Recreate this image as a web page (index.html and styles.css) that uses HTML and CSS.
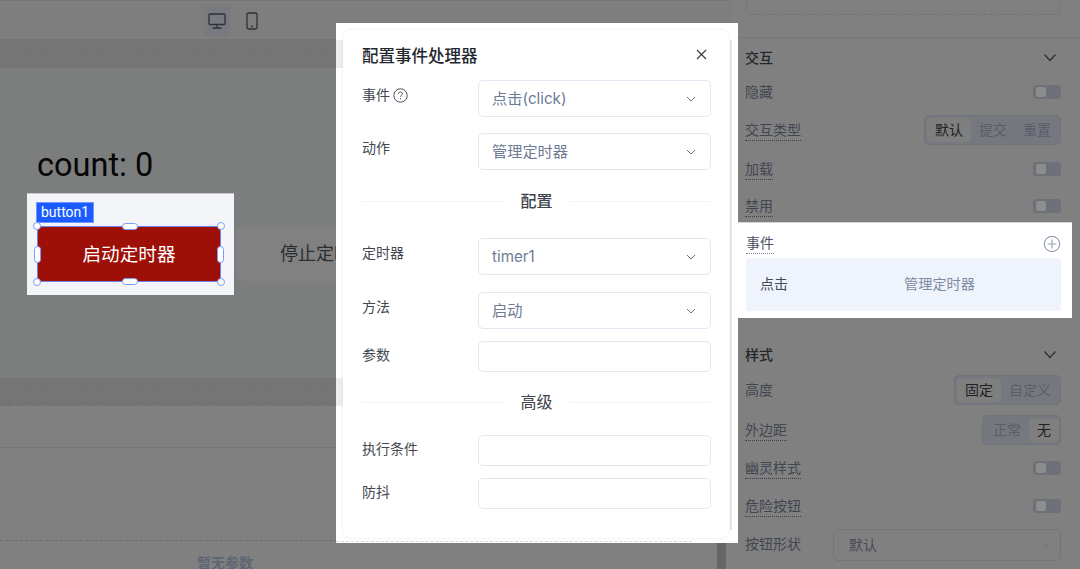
FILE: index.html
```html
<!DOCTYPE html>
<html lang="zh-CN">
<head>
<meta charset="utf-8">
<title>配置事件处理器</title>
<link rel="stylesheet" href="styles.css">
</head>
<body>
<div class="app">
  <main class="main">
    <div class="topbar">
      <span class="device active">
        <svg width="18" height="16" viewBox="0 0 18 16" class="ico"><rect x="1" y="1" width="16" height="10.500" rx="1"/><path d="M9 11.500V15M4.500 15h9"/></svg>
      </span>
      <span class="device">
        <svg width="12" height="18" viewBox="0 0 12 18" class="ico"><rect x="1" y="1" width="10" height="16" rx="1.500"/><path d="M5 14.500h2"/></svg>
      </span>
    </div>
    <div class="band"></div>
    <div class="canvas">
      <div class="count">count: 0</div>
      <div class="btn-row">
        <div class="spot-btn">
          <span class="tag">button1</span>
          <div class="red-btn">
            启动定时器
            <i class="dot d-tl"></i><i class="dot d-tr"></i><i class="dot d-bl"></i><i class="dot d-br"></i>
            <i class="pill p-t"></i><i class="pill p-b"></i><i class="pill p-l"></i><i class="pill p-r"></i>
          </div>
        </div>
        <div class="grey-btn">停止定时器</div>
      </div>
    </div>
    <div class="band band-2"></div>
    <div class="lower">
      <div class="lower-line"></div>
      <div class="params">暂无参数</div>
    </div>
    <div class="thumb"></div>
  </main>

  <aside class="panel">
    <div class="stub"></div>
    <div class="sec-head mt1 h36"><span>交互</span><svg class="chev-dark" width="14" height="9" viewBox="0 0 14 9"><path d="M1.500 1.500 7 7.500l5.500-6"/></svg></div>
    <div class="row h33"><span>隐藏</span><i class="switch"></i></div>
    <div class="row mt2 h40"><span class="dot-u">交互类型</span>
      <div class="seg"><b class="on">默认</b><b>提交</b><b>重置</b></div></div>
    <div class="row h38"><span class="dot-u">加载</span><i class="switch"></i></div>
    <div class="row mt2 h32"><span class="dot-u">禁用</span><i class="switch"></i></div>

    <section class="spot-event">
      <div class="ev-head"><span class="dot-u ev-title">事件</span>
        <svg width="18" height="18" viewBox="0 0 18 18" class="plus"><circle cx="9" cy="9" r="7.700"/><path d="M9 4.500v9M4.500 9h9"/></svg></div>
      <div class="ev-card"><span class="ev-name">点击</span><span class="ev-act">管理定时器</span></div>
    </section>

    <div class="sec-head mt18 h36"><span>样式</span><svg class="chev-dark" width="14" height="9" viewBox="0 0 14 9"><path d="M1.500 1.500 7 7.500l5.500-6"/></svg></div>
    <div class="row h35"><span>高度</span><div class="seg"><b class="on">固定</b><b>自定义</b></div></div>
    <div class="row h46"><span class="dot-u">外边距</span><div class="seg"><b>正常</b><b class="on">无</b></div></div>
    <div class="row h30"><span class="dot-u">幽灵样式</span><i class="switch"></i></div>
    <div class="row h46"><span class="dot-u">危险按钮</span><i class="switch"></i></div>
    <div class="row h32"><span class="lift">按钮形状</span>
      <div class="dim-select"><span class="lift">默认</span><svg class="chev" width="10" height="6" viewBox="0 0 10 6"><path d="M1 1l4 4 4-4"/></svg></div></div>
  </aside>

  <div class="modal">
    <div class="card">
      <header class="m-head"><h2>配置事件处理器</h2>
        <svg class="close" width="11" height="11" viewBox="0 0 11 11"><path d="M1 1l9 9M10 1l-9 9"/></svg></header>
      <div class="field"><label class="up">事件<svg class="help" width="15" height="15" viewBox="0 0 15 15"><circle cx="7.500" cy="7.500" r="6.700"/><path d="M5.600 5.800C5.600 4.700 6.400 4 7.500 4s1.900.7 1.900 1.700c0 1.400-1.900 1.500-1.900 3"/><path d="M7.500 10.300v1"/></svg></label>
        <div class="select"><span class="cjk">点击(click)</span><svg class="chev" width="10" height="6" viewBox="0 0 10 6"><path d="M1 1l4 4 4-4"/></svg></div></div>
      <div class="field g16"><label class="up">动作</label>
        <div class="select"><span class="cjk">管理定时器</span><svg class="chev" width="10" height="6" viewBox="0 0 10 6"><path d="M1 1l4 4 4-4"/></svg></div></div>
      <div class="divider d1"><span class="strong">配置</span></div>
      <div class="field g24"><label class="up">定时器</label>
        <div class="select"><span>timer1</span><svg class="chev" width="10" height="6" viewBox="0 0 10 6"><path d="M1 1l4 4 4-4"/></svg></div></div>
      <div class="field g17"><label class="up">方法</label>
        <div class="select"><span class="cjk">启动</span><svg class="chev" width="10" height="6" viewBox="0 0 10 6"><path d="M1 1l4 4 4-4"/></svg></div></div>
      <div class="field g12"><label>参数</label><div class="input"></div></div>
      <div class="divider d2"><span>高级</span></div>
      <div class="field g20"><label>执行条件</label><div class="input"></div></div>
      <div class="field g12"><label>防抖</label><div class="input"></div></div>
    </div>
    <div class="modal-dash"></div>
  </div>
</div>
</body>
</html>
```
FILE: styles.css
```css
* { box-sizing: border-box; }
html, body { margin: 0; height: 569px; overflow: hidden; }
body {
  font-family: Inter, "Noto Sans CJK SC", "Noto Sans", sans-serif;
  font-size: 14px;
  background: #808080;
  color: #4a4e57;
}
.app { position: relative; display: flex; width: 1080px; height: 569px; overflow: hidden; }

/* left, dimmed editor */
.main { position: relative; width: 732px; flex: none; display: flex; flex-direction: column; }
.topbar {
  height: 39px; flex: none; display: flex; justify-content: flex-end; align-items: flex-start;
  gap: 9px; padding: 5px 467px 0 0; background: #7e7e7e; border-top: 1px solid #777;
  box-shadow: inset 0 2px 0 #808080;
}
.device { width: 26px; height: 30px; display: flex; align-items: center; justify-content: center; }
.device.active { background: #787a7f; border-radius: 3px; }
.ico { fill: none; stroke: #2d3138; stroke-width: 1.300; }
.band {
  height: 29px; flex: none; background-color: #757575;
  background-image: radial-gradient(circle, #686868 0.800px, transparent 1.200px);
  background-size: 18.670px 18.670px;
  background-position: -1px 0;
}
.band-2 { height: 28px; background-position: -1px -3px; }
.canvas { height: 310px; flex: none; background: #7c7e7d; padding: 73px 0 0 37px; }
.count { font-family: Roboto, sans-serif; font-size: 32.500px; line-height: 48px; height: 48px; color: #060606; margin-bottom: 4px; }
.btn-row { display: flex; align-items: flex-start; margin-left: -10px; }
.spot-btn { width: 207px; height: 102px; background: #f3f5f9; padding: 8px 0 0 9px; border-top: 1px solid #c8c8c8; }
.tag {
  display: block; width: 58px; height: 21px; background: #1a5cff; color: #fff;
  border: 1px solid #6f97ff; font-family: Roboto, sans-serif; font-size: 14px; line-height: 19px; padding-left: 4px;
}
.red-btn {
  position: relative; width: 184px; height: 56px; margin: 3px 0 0 1px; background: #9e0f08; border: 1px solid #6f84e8;
  border-radius: 3px; color: #fff; font-size: 18.600px; line-height: 54px; text-align: center;
}
.dot, .pill { position: absolute; background: #fff; border: 1px solid #7d9bff; }
.dot { width: 8px; height: 8px; border-radius: 50%; }
.d-tl { left: -5px; top: -5px; } .d-tr { right: -5px; top: -5px; }
.d-bl { left: -5px; bottom: -5px; } .d-br { right: -5px; bottom: -5px; }
.pill { border-radius: 4px; }
.p-t, .p-b { width: 16px; height: 7px; left: 84px; }
.p-t { top: -4px; } .p-b { bottom: -4px; }
.p-l, .p-r { width: 7px; height: 17px; top: 19px; }
.p-l { left: -4px; } .p-r { right: -4px; }
.grey-btn {
  margin: 34px 0 0 2px; width: 180px; height: 54px; background: #818181; border-radius: 5px;
  padding-left: 44px; font-size: 18px; line-height: 54px; color: #2b2c2e; white-space: nowrap;
}
.lower { flex: 1; background: #808080; position: relative; padding-top: 41px; }
.lower-line { border-top: 1px solid #787878; height: 94px; border-bottom: 1px dashed #6b6d70; width: 692px; }
.params { text-align: center; width: 450px; font-size: 14px; font-weight: 700; color: #5e6675; line-height: 20px; margin-top: 12px; }
.thumb { position: absolute; left: 717px; top: 540px; width: 9px; height: 29px; background: #666; }

/* right panel */
.panel { flex: 1; padding: 0 19px 0 13px; background: #808080; position: relative; }
.stub { margin: -10px -19px 0 -13px; border-bottom: 1px solid #767676; position: relative; height: 48px; }
.stub::before { content: ""; position: absolute; left: 14px; right: 20px; top: 0; height: 23px; border: 1px dashed #727272; border-radius: 3px; }
.mt1 { margin-top: 1px; }
.mt2 { margin-top: 2px; }
.mt18 { margin-top: 18px; }
.h30 { height: 30px; } .h32 { height: 32px; } .h33 { height: 33px; } .h35 { height: 35px; } .h36 { height: 36px; }
.h38 { height: 38px; } .h40 { height: 40px; } .h46 { height: 46px; }
.sec-head, .row { display: flex; align-items: center; justify-content: space-between; }
.sec-head span { font-weight: 500; color: #24272c; }
.row > span { color: #424650; line-height: 20px; }
.lift { padding-bottom: 2px; }
.chev-dark { fill: none; stroke: #2e3036; stroke-width: 1.300; margin-right: 4px; }
.dot-u { border-bottom: 1.500px dotted #3a3e47; }
.switch { position: relative; width: 28px; height: 14px; border-radius: 3px; background: #6e7179; flex: none; }
.switch::before { content: ""; position: absolute; left: 3px; top: 2px; width: 10px; height: 10px; border-radius: 2px; background: #8d8d8d; }
.seg {
  display: flex; padding: 2px 1px 2px 2px; background: #76787f; border: 1px solid #70727c; border-radius: 5px; height: 30px;
}
.seg b { font-weight: 400; padding: 0 8px; line-height: 24px; height: 24px; color: #5a5e69; white-space: nowrap; }
.seg b.on { background: #7f7f7f; border-radius: 4px; color: #212226; }
.dim-select {
  width: 228px; height: 32px; border: 1px solid #737579; border-radius: 5px; display: flex; align-items: center;
  justify-content: space-between; padding: 0 9px 0 15px; color: #474b55;
}
.chev { fill: none; stroke: #6c7380; stroke-width: 1; flex: none; }
.spot-event { height: 96px; margin: 0 -11px 0 -7px; background: #fff; padding: 0 11px 0 8px; border-top: 1px solid #d6d6d6; }
.ev-head { height: 35px; display: flex; justify-content: space-between; align-items: center; padding-top: 6px; }
.ev-title { color: #4b5160; line-height: 20px; border-bottom-color: #7c8499; }
.plus { fill: none; stroke: #9aa3b8; stroke-width: 1.200; }
.ev-card {
  height: 53px; background: #eff3fc; border-radius: 3px; display: flex; align-items: center; padding: 0 0 3px 14px;
}
.ev-name { width: 144px; color: #454952; }
.ev-act { color: #7f8ba3; font-size: 14.200px; }

/* modal */
.modal {
  position: absolute; left: 336px; top: 23px; width: 402px; height: 520px; padding: 7px 9px 5px 7px;
  background:
    linear-gradient(#ededed, #ededed) 0 17px / 7px 28px no-repeat,
    linear-gradient(#ededed, #ededed) 0 355px / 7px 28px no-repeat,
    linear-gradient(#e6e6e6, #e6e6e6) 394px 17px / 2px 490px no-repeat,
    #fff;
}
.modal-dash { position: absolute; left: 0; bottom: 1px; width: 356px; border-top: 1px dashed #d8d8d8; }
.card {
  height: 100%; background: #fff; border-radius: 8px; padding: 14px 18px 0 19px;
  box-shadow: 0 0 3px rgba(120, 130, 150, .22);
  position: relative;
}
.m-head { height: 24px; display: flex; justify-content: space-between; align-items: center; padding-right: 4px; }
.m-head h2 { margin: 0; font-size: 16.500px; font-weight: 500; color: #24272d; line-height: 24px; }
.close { fill: none; stroke: #3a3d44; stroke-width: 1.200; margin-top: -3px; }
.field { display: flex; align-items: center; margin-top: 12px; }
.g12 { margin-top: 12px; } .g16 { margin-top: 16px; } .g17 { margin-top: 17px; } .g20 { margin-top: 20px; } .g24 { margin-top: 24px; }
.field label { width: 116px; flex: none; color: #434750; line-height: 20px; display: flex; align-items: center; gap: 3px; padding-bottom: 3px; }
.field label.up { padding-bottom: 7px; }
.help { fill: none; stroke: #4a4e57; stroke-width: 1; }
.select, .input { width: 233px; border: 1px solid #e2e7f2; border-radius: 5px; background: #fff; }
.select {
  height: 37px; display: flex; align-items: center; justify-content: space-between;
  padding: 0 14px 0 13px; font-size: 15.200px; color: #6e7b95;
}
.select .cjk { padding-bottom: 4px; }
.input { height: 31px; }
.divider { display: flex; align-items: center; height: 24px; color: #3f434b; font-size: 16px; }
.divider::before, .divider::after { content: ""; flex: 1; border-top: 1px solid #f0f2f8; }
.divider span { width: 66px; text-align: center; padding-bottom: 2px; }
.divider .strong { font-weight: 500; }
.d1 { margin-top: 19px; }
.d2 { margin-top: 18px; }
.d1 + .field { margin-top: 25px; }
.d2 + .field { margin-top: 21px; }
```
